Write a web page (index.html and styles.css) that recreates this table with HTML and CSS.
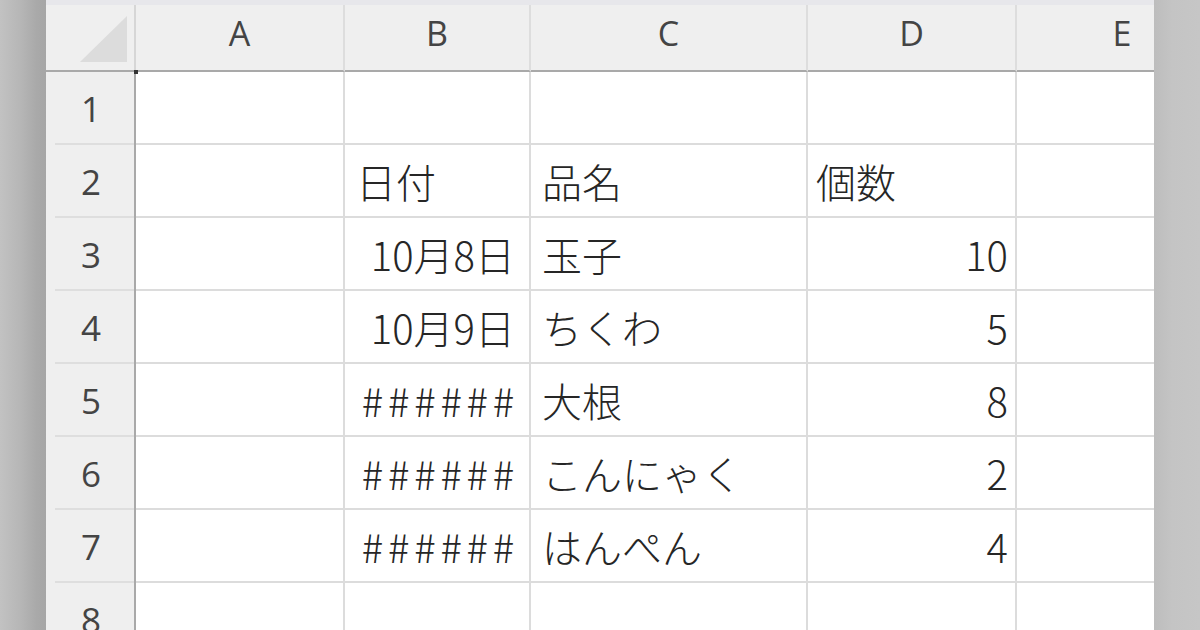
FILE: index.html
```html
<!DOCTYPE html>
<html lang="ja">
<head>
<meta charset="utf-8">
<title>Sheet</title>
<link rel="stylesheet" href="styles.css">
</head>
<body>
<div class="page">
  <div class="blur blur-left"></div>
  <div class="sheet">
    <div class="topbar"></div>
    <div class="grid">
      <div class="corner">
        <svg width="88" height="70" viewBox="0 0 88 70"><polygon points="81,11 81,57 34,57" fill="#dcdcdc"/></svg>
      </div>
      <div class="hd">A</div>
      <div class="hd">B</div>
      <div class="hd">C</div>
      <div class="hd">D</div>
      <div class="hd">E</div>

      <div class="rh">1</div>
      <div class="c"></div><div class="c"></div><div class="c"></div><div class="c"></div><div class="c"></div>

      <div class="rh">2</div>
      <div class="c"></div><div class="c pl">日付</div><div class="c pl">品名</div><div class="c pl pd">個数</div><div class="c"></div>

      <div class="rh">3</div>
      <div class="c"></div><div class="c rb">10月8日</div><div class="c pl">玉子</div><div class="c rd">10</div><div class="c"></div>

      <div class="rh">4</div>
      <div class="c"></div><div class="c rb">10月9日</div><div class="c pl">ちくわ</div><div class="c rd">5</div><div class="c"></div>

      <div class="rh">5</div>
      <div class="c"></div><div class="c rb hash">######</div><div class="c pl">大根</div><div class="c rd">8</div><div class="c"></div>

      <div class="rh">6</div>
      <div class="c"></div><div class="c rb hash">######</div><div class="c pl">こんにゃく</div><div class="c rd">2</div><div class="c"></div>

      <div class="rh">7</div>
      <div class="c"></div><div class="c rb hash">######</div><div class="c pl">はんぺん</div><div class="c rd">4</div><div class="c"></div>

      <div class="rh">8</div>
      <div class="c"></div><div class="c"></div><div class="c"></div><div class="c"></div><div class="c"></div>

      <div class="handle"></div>
    </div>
  </div>
  <div class="blur blur-right"></div>
</div>
</body>
</html>
```

FILE: styles.css
```css
* { box-sizing: border-box; }
html, body {
  margin: 0;
  padding: 0;
  width: 1200px;
  height: 630px;
  overflow: hidden;
  background: #c0c0c0;
}
.page {
  display: flex;
  width: 1200px;
  height: 630px;
}
.blur { flex: 0 0 46px; height: 630px; }
.blur-left {
  background: linear-gradient(90deg, #c2c2c2 0%, #b6b6b6 45%, #a9a9a9 80%, #a6a6a6 100%);
}
.blur-right {
  background: linear-gradient(90deg, #bdbdbd 0%, #c4c4c4 40%, #c6c6c6 100%);
}
.sheet {
  flex: 0 0 1108px;
  width: 1108px;
  height: 630px;
  overflow: hidden;
  background: #ffffff;
}
.topbar {
  height: 5px;
  background: #e7e7eb;
}
.grid {
  position: relative;
  display: grid;
  grid-template-columns: 90px 209px 186px 277px 209px 212px;
  grid-template-rows: 67px repeat(8, 73px);
  width: 1183px;
}
.corner {
  background: #efefef;
  border-right: 2px solid #d6d6d6;
  border-bottom: 2px solid #a9a9a9;
}
.corner svg { display: block; }
.hd {
  background: #efefef;
  border-right: 2px solid #dddddd;
  border-bottom: 2px solid #a9a9a9;
  display: flex;
  align-items: center;
  justify-content: center;
  padding-bottom: 10px;
  font-family: "Open Sans", "Noto Sans", sans-serif;
  font-size: 34px;
  color: #444444;
}
.rh {
  background: #efefef linear-gradient(#dedede, #dedede) no-repeat 9px 100% / calc(100% - 9px) 2px;
  border-right: 2px solid #a9a9a9;
  display: flex;
  align-items: center;
  justify-content: center;
  padding-left: 2px;
  font-family: "Open Sans", "Noto Sans", sans-serif;
  font-size: 35px;
  color: #444444;
}
.c {
  border-right: 2px solid #dcdcdc;
  border-bottom: 2px solid #dcdcdc;
  display: flex;
  align-items: center;
  font-family: "Noto Sans CJK JP", "Noto Sans", sans-serif;
  font-weight: 300;
  font-size: 40px;
  color: #262626;
  white-space: nowrap;
  overflow: hidden;
}
.pl { padding-left: 11px; }
.pd { padding-left: 8px; }
.rb { justify-content: flex-end; padding-right: 14px; }
.rd { justify-content: flex-end; padding-right: 7px; }
.hash { letter-spacing: 4.8px; padding-right: 10px; }
.handle {
  position: absolute;
  left: 88px;
  top: 65px;
  width: 4px;
  height: 4px;
  background: #333333;
}
```
